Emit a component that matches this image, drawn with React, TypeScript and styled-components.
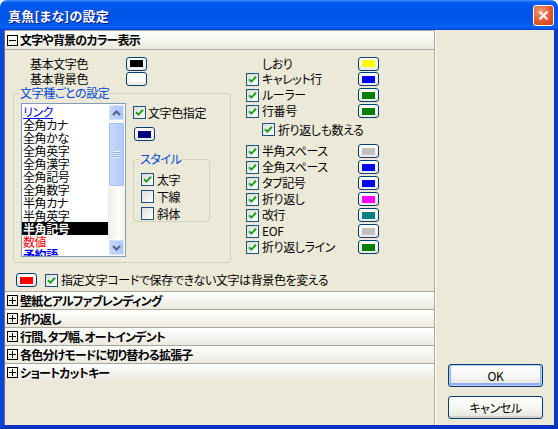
import React from 'react';
import styled, { createGlobalStyle } from 'styled-components';

const GlobalStyle = createGlobalStyle`
  html, body { margin: 0; padding: 0; background: #ffffff; }
  body {
    font-family: "Noto Sans CJK JP", "Noto Sans", sans-serif;
    font-size: 12px;
    font-feature-settings: "palt";
    letter-spacing: -0.4px;
    color: #000;
  }
  * { box-sizing: border-box; }
`;

const Window = styled.div`
  width: 558px;
  height: 429px;
  display: flex;
  flex-direction: column;
`;

const TitleBar = styled.div`
  height: 30px;
  flex-shrink: 0;
  display: flex;
  align-items: center;
  justify-content: space-between;
  padding: 0 4px 0 8px;
  border-radius: 7px 7px 0 0;
  background: linear-gradient(180deg, #3d8ef9 0%, #0a5ff0 8%, #0058ee 16%, #0053e6 45%, #0057ec 75%, #0062f6 90%, #0050e4 96%, #003fd2 100%);
`;

const Title = styled.span`
  color: #fff;
  font-weight: bold;
  font-size: 13px;
  letter-spacing: 0.2px;
  text-shadow: 1px 1px 0 #0a1883;
`;

const CloseButton = styled.div`
  width: 21px;
  height: 21px;
  border: 1px solid #fff;
  border-radius: 3px;
  background: radial-gradient(circle at 35% 30%, #f0a080 0%, #e2572c 55%, #c8401a 100%);
  display: flex;
  align-items: center;
  justify-content: center;
`;

const Body = styled.div`
  flex: 1;
  display: flex;
  background: #ece9d8;
  border: 4px solid #0842d6;
  border-top: 0;
  border-left-color: #0a46da;
  border-right-color: #0636c4;
  border-bottom-color: #0533c0;
`;

const LeftPanel = styled.div`
  width: 431px;
  display: flex;
  flex-direction: column;
  border-left: 1px solid #716f64;
  border-right: 1px solid #aca899;
`;

const SectionHeader = styled.div<{ $bottom?: boolean }>`
  height: ${p => (p.$bottom ? 20 : 18)}px;
  flex-shrink: 0;
  display: flex;
  align-items: center;
  gap: 2px;
  padding-left: 2px;
  border-top: 1px solid #aca899;
  border-bottom: ${p => (p.$bottom ? '1px solid #aca899' : '0')};
  background: linear-gradient(180deg, #ffffff 0%, #f7f6f1 45%, #ebe9df 100%);
  font-weight: bold;
  letter-spacing: -0.8px;
  line-height: 16px;
`;

const ToggleBox = styled.span`
  width: 11px;
  height: 11px;
  border: 1px solid #000;
  flex-shrink: 0;
  display: flex;
  align-items: center;
  justify-content: center;
`;

const Content = styled.div`
  height: 241px;
  flex-shrink: 0;
  padding: 6px 0 0 8px;
  display: flex;
  flex-direction: column;
`;

const TopArea = styled.div`
  display: flex;
`;

const LeftCol = styled.div`
  width: 218px;
  display: flex;
  flex-direction: column;
`;

const BaseRow = styled.div`
  height: 15px;
  display: flex;
  align-items: center;
  padding-left: 17px;
`;

const BaseLabel = styled.span`
  width: 96px;
  line-height: 15px;
`;

const Swatch = styled.div`
  width: 21px;
  height: 14px;
  flex-shrink: 0;
  border: 1px solid #003c74;
  border-radius: 3px;
  background: linear-gradient(180deg, #ffffff, #ecebe6);
  display: flex;
  align-items: center;
  justify-content: center;
`;

const SwatchColor = styled.span<{ $c: string }>`
  width: 13px;
  height: 7px;
  background: ${p => p.$c};
`;

const Group = styled.div<{ $w: number; $h: number; $pt: number }>`
  position: relative;
  width: ${p => p.$w}px;
  height: ${p => p.$h}px;
  border: 1px solid #d0d0bf;
  border-radius: 3px;
  padding: ${p => p.$pt}px 0 0 7px;
`;

const GroupLabel = styled.span`
  position: absolute;
  left: 5px;
  top: -9px;
  padding: 0 1px;
  background: #ece9d8;
  color: #0046d5;
  line-height: 16px;
`;

const GroupInner = styled.div`
  display: flex;
  gap: 7px;
`;

const ListBox = styled.div`
  width: 105px;
  height: 154px;
  border: 1px solid #7f9db9;
  background: #fff;
  display: flex;
  overflow: hidden;
`;

const ListItems = styled.div`
  flex: 1;
  padding-top: 1px;
  overflow: hidden;
`;

const ListItem = styled.div<{ $color?: string; $sel?: boolean; $bold?: boolean; $link?: boolean }>`
  height: 13px;
  line-height: 13px;
  padding-left: 1px;
  white-space: nowrap;
  color: ${p => (p.$sel ? '#fff' : p.$color || '#000')};
  background: ${p => (p.$sel ? '#000' : 'transparent')};
  font-weight: ${p => (p.$sel || p.$bold ? 'bold' : 'normal')};
  text-decoration: ${p => (p.$link ? 'underline' : 'none')};
`;

const ScrollBar = styled.div`
  width: 17px;
  display: flex;
  flex-direction: column;
  background: linear-gradient(90deg, #eeede5, #fdfdfa 60%, #f3f1ea);
`;

const ScrollBtn = styled.div`
  height: 17px;
  border: 1px solid #fff;
  border-radius: 2px;
  background: linear-gradient(90deg, #c6d5fc, #b9cdfb 50%, #aec5f7);
  box-shadow: inset 0 0 0 1px #d6e2fc;
  display: flex;
  align-items: center;
  justify-content: center;
`;

const Thumb = styled.div`
  height: 65px;
  margin-top: 1px;
  border: 1px solid #fff;
  border-radius: 2px;
  background: linear-gradient(90deg, #c9d8fc, #bcd0fc 50%, #b0c7f8);
  box-shadow: inset 0 0 0 1px #a8bff0;
  display: flex;
  align-items: center;
  justify-content: center;
`;

const Grip = styled.div`
  width: 7px;
  height: 7px;
  background: repeating-linear-gradient(180deg, #eef3fe 0 1px, #8caae6 1px 2px);
`;

const Spacer = styled.div`
  flex: 1;
`;

const StyleCol = styled.div`
  display: flex;
  flex-direction: column;
  align-items: flex-start;
`;

const CheckRow = styled.label<{ $h?: number; $indent?: number }>`
  display: flex;
  align-items: center;
  gap: 3px;
  height: ${p => p.$h || 16}px;
  padding-left: ${p => p.$indent || 0}px;
  line-height: 14px;
  white-space: nowrap;
`;

const Box = styled.span`
  width: 13px;
  height: 13px;
  flex-shrink: 0;
  border: 1px solid #1c5180;
  background: linear-gradient(135deg, #dcdcd7 0%, #f4f4f2 70%, #ffffff 100%);
  display: flex;
  align-items: center;
  justify-content: center;
`;

const RightCol = styled.div`
  margin-left: 15px;
  display: flex;
  flex-direction: column;
`;

const OptRow = styled.div<{ $h?: number; $mt?: number }>`
  display: flex;
  align-items: center;
  height: ${p => p.$h || 16}px;
  margin-top: ${p => p.$mt || 0}px;
`;

const OptLabel = styled.div<{ $pad?: number }>`
  width: 112px;
  padding-left: ${p => p.$pad || 0}px;
  display: flex;
  align-items: center;
`;

const BottomRow = styled.div`
  display: flex;
  align-items: center;
  gap: 8px;
  margin-top: 10px;
  padding-left: 3px;
  height: 14px;
`;

const RightPanel = styled.div`
  flex: 1;
  border-left: 1px solid #fff;
  display: flex;
  flex-direction: column;
  justify-content: flex-end;
  gap: 9px;
  padding: 0 0 6px 12px;
`;

const PushButton = styled.div<{ $def?: boolean }>`
  width: 95px;
  height: 23px;
  border: 1px solid #003c74;
  border-radius: 3px;
  background: linear-gradient(180deg, #ffffff 0%, #f4f4f0 60%, #e3e2da 100%);
  box-shadow: ${p => (p.$def ? 'inset 0 0 0 1px #b9cff5, inset 0 -1px 0 2px #8fb0ea' : 'inset 0 -2px 0 #d6d0c5')};
  display: flex;
  align-items: center;
  justify-content: center;
  line-height: 14px;
`;

const Check = ({ on }: { on?: boolean }) => (
  <Box>
    {on && (
      <svg width="9" height="9" viewBox="0 0 9 9">
        <polyline points="1,4.2 3.4,6.6 8,1.8" fill="none" stroke="#21a121" strokeWidth="2" />
      </svg>
    )}
  </Box>
);

const ColorBtn = ({ c }: { c: string }) => (
  <Swatch>
    <SwatchColor $c={c} />
  </Swatch>
);

const Toggle = ({ open }: { open?: boolean }) => (
  <ToggleBox>
    <svg width="9" height="9" viewBox="0 0 9 9">
      <line x1="1" y1="4.5" x2="8" y2="4.5" stroke="#000" strokeWidth="1" />
      {!open && <line x1="4.5" y1="1" x2="4.5" y2="8" stroke="#000" strokeWidth="1" />}
    </svg>
  </ToggleBox>
);

const Arrow = ({ up }: { up?: boolean }) => (
  <svg width="9" height="6" viewBox="0 0 9 6">
    <polyline
      points={up ? '1,5 4.5,1.5 8,5' : '1,1 4.5,4.5 8,1'}
      fill="none"
      stroke="#4d6185"
      strokeWidth="2"
    />
  </svg>
);

const listItems = [
  { t: 'リンク', color: '#0000ff', link: true },
  { t: '全角カナ' },
  { t: '全角かな' },
  { t: '全角英字' },
  { t: '全角漢字' },
  { t: '全角記号' },
  { t: '全角数字' },
  { t: '半角カナ' },
  { t: '半角英字' },
  { t: '半角記号', sel: true },
  { t: '数値', color: '#ff0000' },
  { t: '予約語', color: '#0000ff', bold: true },
];

const topOptions = [
  { t: 'キャレット行', c: '#0000ff' },
  { t: 'ルーラー', c: '#008000' },
  { t: '行番号', c: '#008000' },
];

const markOptions = [
  { t: '半角スペース', c: '#c0c0c0' },
  { t: '全角スペース', c: '#0000ff' },
  { t: 'タブ記号', c: '#0000ff' },
  { t: '折り返し', c: '#ff00ff' },
  { t: '改行', c: '#008080' },
  { t: 'EOF', c: '#c0c0c0' },
  { t: '折り返しライン', c: '#008000' },
];

const collapsed = [
  '壁紙とアルファブレンディング',
  '折り返し',
  '行間、タブ幅、オートインデント',
  '各色分けモードに切り替わる拡張子',
  'ショートカットキー',
];

export default function App() {
  return (
    <Window>
      <GlobalStyle />
      <TitleBar>
        <Title>真魚[まな]の設定</Title>
        <CloseButton>
          <svg width="11" height="11" viewBox="0 0 11 11">
            <path d="M1.5 1.5 L9.5 9.5 M9.5 1.5 L1.5 9.5" stroke="#fff" strokeWidth="2" />
          </svg>
        </CloseButton>
      </TitleBar>
      <Body>
        <LeftPanel>
          <SectionHeader $bottom>
            <Toggle open />
            文字や背景のカラー表示
          </SectionHeader>
          <Content>
            <TopArea>
              <LeftCol>
                <BaseRow>
                  <BaseLabel>基本文字色</BaseLabel>
                  <ColorBtn c="#000000" />
                </BaseRow>
                <BaseRow>
                  <BaseLabel>基本背景色</BaseLabel>
                  <ColorBtn c="#ffffff" />
                </BaseRow>
                <div style={{ height: 7 }} />
                <Group $w={218} $h={170} $pt={9}>
                  <GroupLabel>文字種ごとの設定</GroupLabel>
                  <GroupInner>
                    <ListBox>
                      <ListItems>
                        {listItems.map(it => (
                          <ListItem key={it.t} $color={it.color} $sel={it.sel} $bold={it.bold} $link={it.link}>
                            {it.t}
                          </ListItem>
                        ))}
                      </ListItems>
                      <ScrollBar>
                        <ScrollBtn>
                          <Arrow up />
                        </ScrollBtn>
                        <Thumb>
                          <Grip />
                        </Thumb>
                        <Spacer />
                        <ScrollBtn>
                          <Arrow />
                        </ScrollBtn>
                      </ScrollBar>
                    </ListBox>
                    <StyleCol>
                      <CheckRow $h={13} style={{ marginTop: 3, gap: 2 }}>
                        <Check on />
                        文字色指定
                      </CheckRow>
                      <div style={{ marginTop: 8, marginLeft: 1 }}>
                        <ColorBtn c="#000080" />
                      </div>
                      <div style={{ marginTop: 18 }}>
                        <Group $w={77} $h={63} $pt={11}>
                          <GroupLabel>スタイル</GroupLabel>
                          <CheckRow $h={17}>
                            <Check on />
                            太字
                          </CheckRow>
                          <CheckRow $h={17}>
                            <Check />
                            下線
                          </CheckRow>
                          <CheckRow $h={17}>
                            <Check />
                            斜体
                          </CheckRow>
                        </Group>
                      </div>
                    </StyleCol>
                  </GroupInner>
                </Group>
              </LeftCol>
              <RightCol>
                <OptRow $h={15}>
                  <OptLabel $pad={16}>しおり</OptLabel>
                  <ColorBtn c="#ffff00" />
                </OptRow>
                {topOptions.map(o => (
                  <OptRow key={o.t}>
                    <OptLabel>
                      <CheckRow>
                        <Check on />
                        {o.t}
                      </CheckRow>
                    </OptLabel>
                    <ColorBtn c={o.c} />
                  </OptRow>
                ))}
                <OptRow $h={21}>
                  <CheckRow $h={21} $indent={16}>
                    <Check on />
                    折り返しも数える
                  </CheckRow>
                </OptRow>
                {markOptions.map((o, i) => (
                  <OptRow key={o.t} $mt={i === 0 ? 3 : 0}>
                    <OptLabel>
                      <CheckRow>
                        <Check on />
                        {o.t}
                      </CheckRow>
                    </OptLabel>
                    <ColorBtn c={o.c} />
                  </OptRow>
                ))}
              </RightCol>
            </TopArea>
            <BottomRow>
              <ColorBtn c="#ff0000" />
              <CheckRow $h={14}>
                <Check on />
                指定文字コードで保存できない文字は背景色を変える
              </CheckRow>
            </BottomRow>
          </Content>
          {collapsed.map(t => (
            <SectionHeader key={t}>
              <Toggle />
              {t}
            </SectionHeader>
          ))}
        </LeftPanel>
        <RightPanel>
          <PushButton $def>OK</PushButton>
          <PushButton>キャンセル</PushButton>
        </RightPanel>
      </Body>
    </Window>
  );
}
